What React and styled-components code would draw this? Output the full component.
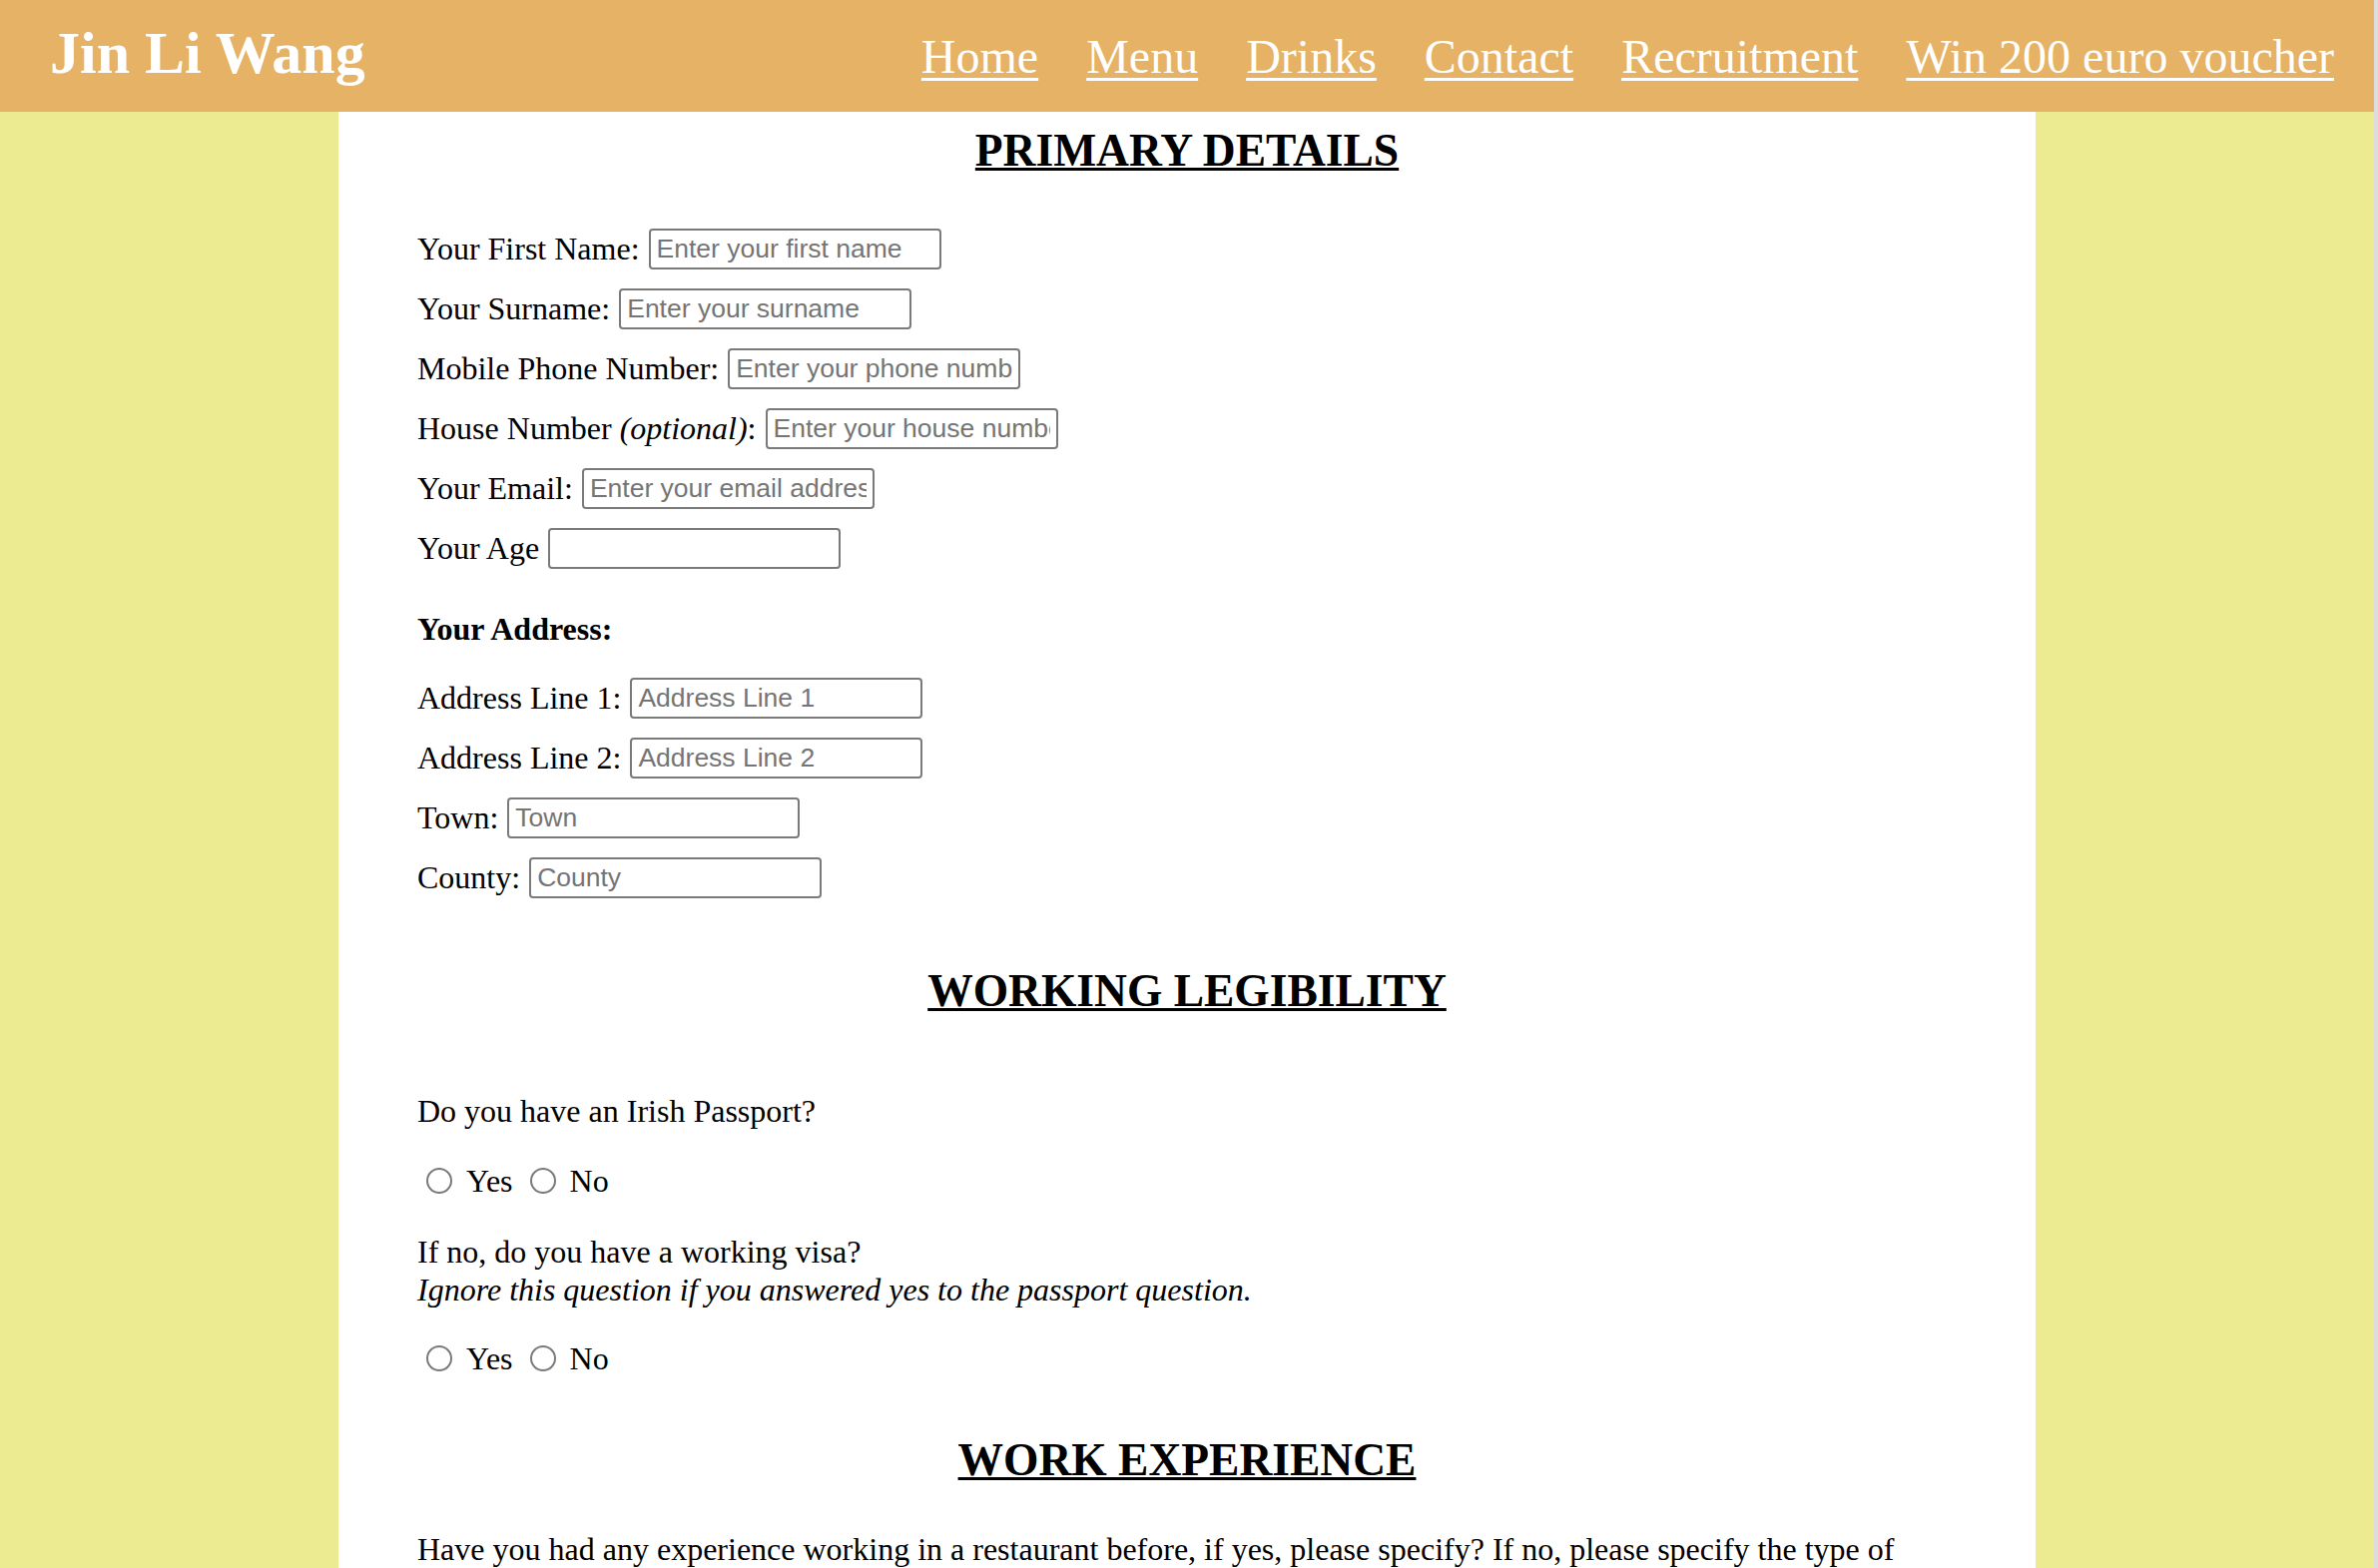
import React from 'react';
import styled, { createGlobalStyle } from 'styled-components';

const GlobalStyle = createGlobalStyle`
  body {
    margin: 0;
    background: #edeb92;
    font-family: 'Liberation Serif', 'Times New Roman', serif;
    color: #000;
  }
`;

const Page = styled.div`
  display: flex;
  min-height: 100vh;
`;

const Viewport = styled.div`
  flex: 1;
  min-width: 0;
`;

const ScrollTrack = styled.div`
  width: 4px;
  flex-shrink: 0;
  background: #dddde0;
`;

const Header = styled.header`
  display: flex;
  align-items: center;
  justify-content: space-between;
  height: 112px;
  padding: 0 40px 0 50px;
  background: #e5b266;
`;

const Logo = styled.div`
  color: #fff;
  font-size: 60px;
  font-weight: bold;
  margin-top: -6px;
`;

const Nav = styled.nav`
  display: flex;
  gap: 48px;
`;

const NavLink = styled.a`
  color: #fff;
  font-size: 48px;
  text-decoration: underline;
  text-decoration-thickness: 3px;
  text-underline-offset: 5px;
  cursor: pointer;
`;

const Panel = styled.main`
  width: 1700px;
  min-height: calc(100vh - 112px);
  margin: 0 auto;
  padding: 0 79px;
  box-sizing: border-box;
  background: #fff;
  overflow: hidden;
`;

const SectionTitle = styled.h2`
  margin: ${(p) => p.$top}px 0 0;
  font-size: 45.5px;
  line-height: 52px;
  font-weight: bold;
  text-align: center;
  text-decoration: underline;
  text-decoration-thickness: 3px;
`;

const FieldList = styled.div`
  display: flex;
  flex-direction: column;
  gap: 19px;
  margin-top: ${(p) => p.$top}px;
`;

const FieldRow = styled.label`
  display: flex;
  align-items: center;
  gap: 9px;
  height: 41px;
  font-size: 32px;
`;

const TextInput = styled.input`
  width: 293px;
  height: 41px;
  box-sizing: border-box;
  padding: 0 6px;
  border: 2px solid #7a7a7a;
  border-radius: 4px;
  font-family: 'Liberation Sans', Arial, sans-serif;
  font-size: 26.5px;
  color: #000;
  &::placeholder {
    color: #757575;
  }
`;

const SubHeading = styled.div`
  margin-top: ${(p) => p.$top}px;
  font-size: 32px;
  line-height: 36px;
  font-weight: bold;
`;

const Question = styled.p`
  margin: ${(p) => p.$top}px 0 0;
  font-size: 32px;
  line-height: ${(p) => p.$lh || 36}px;
`;

const RadioGroup = styled.div`
  display: flex;
  align-items: center;
  gap: 17px;
  height: 36px;
  margin-top: ${(p) => p.$top}px;
  padding-left: 9px;
`;

const RadioOption = styled.label`
  display: flex;
  align-items: center;
  gap: 14px;
  font-size: 32px;
`;

const Radio = styled.input`
  appearance: none;
  width: 26px;
  height: 26px;
  margin: 0;
  border: 2px solid #7a7a7a;
  border-radius: 50%;
  box-sizing: border-box;
  background: #fff;
  &:checked {
    border: 8px solid #0a64d6;
  }
`;

const primaryFields = [
  { label: 'Your First Name:', placeholder: 'Enter your first name' },
  { label: 'Your Surname:', placeholder: 'Enter your surname' },
  { label: 'Mobile Phone Number:', placeholder: 'Enter your phone number' },
  { label: 'House Number', optional: true, placeholder: 'Enter your house number' },
  { label: 'Your Email:', placeholder: 'Enter your email address' },
  { label: 'Your Age', placeholder: '' },
];

const addressFields = ['Address Line 1', 'Address Line 2', 'Town', 'County'];

const YesNo = ({ name, top }) => (
  <RadioGroup $top={top}>
    <RadioOption>
      <Radio type="radio" name={name} value="yes" />
      Yes
    </RadioOption>
    <RadioOption>
      <Radio type="radio" name={name} value="no" />
      No
    </RadioOption>
  </RadioGroup>
);

export default function App() {
  return (
    <Page>
      <GlobalStyle />
      <Viewport>
        <Header>
          <Logo>Jin Li Wang</Logo>
          <Nav>
            <NavLink>Home</NavLink>
            <NavLink>Menu</NavLink>
            <NavLink>Drinks</NavLink>
            <NavLink>Contact</NavLink>
            <NavLink>Recruitment</NavLink>
            <NavLink>Win 200 euro voucher</NavLink>
          </Nav>
        </Header>
        <Panel>
          <SectionTitle $top={13}>PRIMARY DETAILS</SectionTitle>
          <FieldList $top={52}>
            {primaryFields.map((f) => (
              <FieldRow key={f.label}>
                <span>
                  {f.label}
                  {f.optional && (
                    <>
                      {' '}
                      <i>(optional)</i>:
                    </>
                  )}
                </span>
                <TextInput type="text" placeholder={f.placeholder} />
              </FieldRow>
            ))}
          </FieldList>

          <SubHeading $top={42}>Your Address:</SubHeading>
          <FieldList $top={31}>
            {addressFields.map((f) => (
              <FieldRow key={f}>
                <span>{f}:</span>
                <TextInput type="text" placeholder={f} />
              </FieldRow>
            ))}
          </FieldList>

          <SectionTitle $top={67}>WORKING LEGIBILITY</SectionTitle>
          <Question $top={76}>Do you have an Irish Passport?</Question>
          <YesNo name="passport" top={34} />
          <Question $top={34} $lh={38}>
            If no, do you have a working visa?
            <br />
            <i>Ignore this question if you answered yes to the passport question.</i>
          </Question>
          <YesNo name="visa" top={32} />

          <SectionTitle $top={58}>WORK EXPERIENCE</SectionTitle>
          <Question $top={45}>
            Have you had any experience working in a restaurant before, if yes, please
            specify? If no, please specify the type of work you have done previously.
          </Question>
        </Panel>
      </Viewport>
      <ScrollTrack />
    </Page>
  );
}
